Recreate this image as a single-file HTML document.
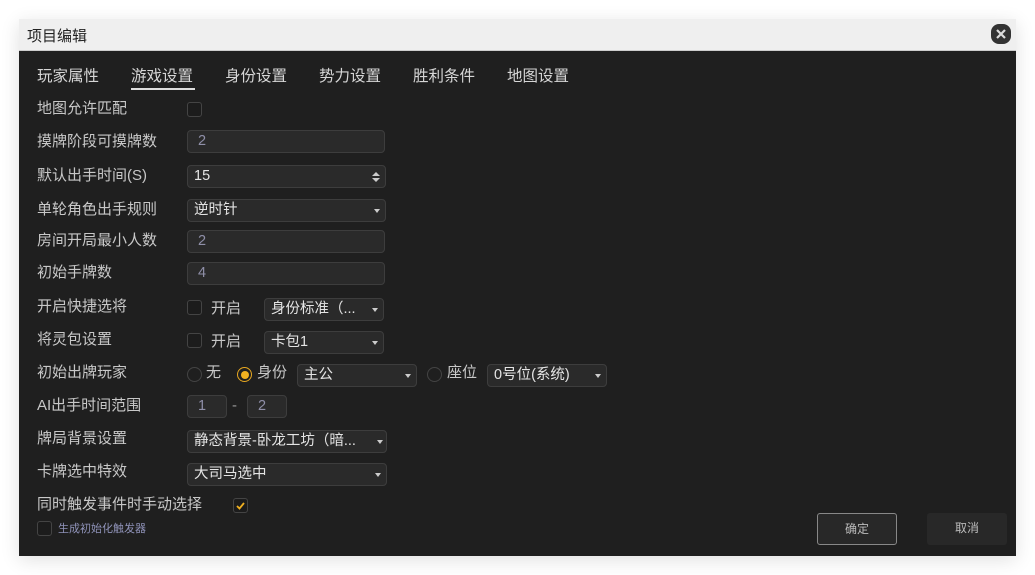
<!DOCTYPE html>
<html><head><meta charset="utf-8"><style>
*{margin:0;padding:0;box-sizing:border-box}
body{width:1035px;height:575px;background:#fff;font-family:"Liberation Sans","Noto Sans CJK SC",sans-serif;position:relative;overflow:hidden}
.dlg{position:absolute;left:19px;top:19px;width:997px;height:537px;box-shadow:0 4px 18px rgba(0,0,0,.12)}
.title{position:absolute;left:0;top:0;width:997px;height:32px;background:#efefef;border-bottom:1px solid #ccc;font-size:15px;color:#222;padding:6px 8px}
.close{position:absolute;right:5px;top:5px;width:20px;height:20px;border-radius:8px;background:#333}
.body{position:absolute;left:0;top:32px;width:997px;height:505px;background:#1f1f1f}
.a{position:absolute;font-size:15px;color:#c8c8c8;white-space:nowrap;line-height:20px}
.tab{font-size:15.5px;color:#d6d6d6}
.in{position:absolute;height:23px;background:#2a2a2a;border:1px solid #3d3d3d;border-radius:4px;color:#8f8fa8;font-size:14.5px;padding:1px 10px;line-height:19px;white-space:nowrap}
.sel{color:#e4e4e4;padding-left:6px}
.arr{position:absolute;right:5px;top:9px;width:0;height:0;border-left:3.5px solid transparent;border-right:3.5px solid transparent;border-top:4px solid #ccc}
.cb{position:absolute;width:15px;height:15px;border:1px solid #444;border-radius:3px;background:#1c1c1c}
.rd{position:absolute;width:15px;height:15px;border:1px solid #444;border-radius:50%}
.btn{position:absolute;width:80px;height:32px;border-radius:3px;background:#282828;color:#bbb;font-size:12px;text-align:center;line-height:30px}
</style></head><body>
<div class="dlg">
<div class="title">项目编辑<div class="close"><svg width="20" height="20"><path d="M6 6L14 14M14 6L6 14" stroke="#ddd" stroke-width="2.2"/></svg></div></div>
<div class="body"></div>
</div>
<div class="a tab" style="left:37px;top:67px">玩家属性</div>
<div class="a tab" style="left:131px;top:67px">游戏设置</div>
<div style="position:absolute;left:131px;top:88px;width:64px;height:2px;background:#ddd"></div>
<div class="a tab" style="left:225px;top:67px">身份设置</div>
<div class="a tab" style="left:319px;top:67px">势力设置</div>
<div class="a tab" style="left:413px;top:67px">胜利条件</div>
<div class="a tab" style="left:507px;top:67px">地图设置</div>

<div class="a" style="left:37px;top:99px">地图允许匹配</div>
<div class="cb" style="left:187px;top:102px"></div>
<div class="a" style="left:37px;top:132px">摸牌阶段可摸牌数</div>
<div class="in" style="left:187px;top:130px;width:198px">2</div>
<div class="a" style="left:37px;top:166px">默认出手时间(S)</div>
<div class="in sel" style="left:187px;top:165px;width:199px">15<svg style="position:absolute;right:5px;top:5px" width="8" height="12"><path d="M0 5L4 1L8 5ZM0 7L4 11L8 7Z" fill="#ccc"/></svg></div>
<div class="a" style="left:37px;top:200px">单轮角色出手规则</div>
<div class="in sel" style="left:187px;top:199px;width:199px">逆时针<i class="arr"></i></div>
<div class="a" style="left:37px;top:231px">房间开局最小人数</div>
<div class="in" style="left:187px;top:230px;width:198px">2</div>
<div class="a" style="left:37px;top:263px">初始手牌数</div>
<div class="in" style="left:187px;top:262px;width:198px">4</div>
<div class="a" style="left:37px;top:297px">开启快捷选将</div>
<div class="cb" style="left:187px;top:300px"></div>
<div class="a" style="left:211px;top:299px">开启</div>
<div class="in sel" style="left:264px;top:298px;width:120px">身份标准（...<i class="arr"></i></div>
<div class="a" style="left:37px;top:330px">将灵包设置</div>
<div class="cb" style="left:187px;top:333px"></div>
<div class="a" style="left:211px;top:332px">开启</div>
<div class="in sel" style="left:264px;top:331px;width:120px">卡包1<i class="arr"></i></div>
<div class="a" style="left:37px;top:363px">初始出牌玩家</div>
<div class="rd" style="left:187px;top:367px"></div>
<div class="a" style="left:206px;top:363px">无</div>
<div class="rd" style="left:237px;top:367px;border-color:#e8a820"><div style="width:8px;height:8px;border-radius:50%;background:#f0b020;margin:2.5px"></div></div>
<div class="a" style="left:257px;top:363px">身份</div>
<div class="in sel" style="left:297px;top:364px;width:120px">主公<i class="arr"></i></div>
<div class="rd" style="left:427px;top:367px"></div>
<div class="a" style="left:447px;top:363px">座位</div>
<div class="in sel" style="left:487px;top:364px;width:120px">0号位(系统)<i class="arr"></i></div>
<div class="a" style="left:37px;top:396px">AI出手时间范围</div>
<div class="in" style="left:187px;top:395px;width:40px">1</div>
<div class="a" style="left:232px;top:396px;color:#999">-</div>
<div class="in" style="left:247px;top:395px;width:40px">2</div>
<div class="a" style="left:37px;top:429px">牌局背景设置</div>
<div class="in sel" style="left:187px;top:430px;width:200px">静态背景-卧龙工坊（暗...<i class="arr" style="right:3px"></i></div>
<div class="a" style="left:37px;top:462px">卡牌选中特效</div>
<div class="in sel" style="left:187px;top:463px;width:200px">大司马选中<i class="arr"></i></div>
<div class="a" style="left:37px;top:495px">同时触发事件时手动选择</div>
<div class="cb" style="left:233px;top:498px"><svg width="13" height="13" style="position:absolute;left:0;top:0"><path d="M3 7L5.5 9.5L10 4" stroke="#f0b020" stroke-width="1.8" fill="none"/></svg></div>
<div class="cb" style="left:37px;top:521px"></div>
<div class="a" style="left:58px;top:519px;font-size:11px;color:#8f92b8">生成初始化触发器</div>
<div class="btn" style="left:817px;top:513px;border:1px solid #888;color:#bbb">确定</div>
<div class="btn" style="left:927px;top:513px">取消</div>
</body></html>
